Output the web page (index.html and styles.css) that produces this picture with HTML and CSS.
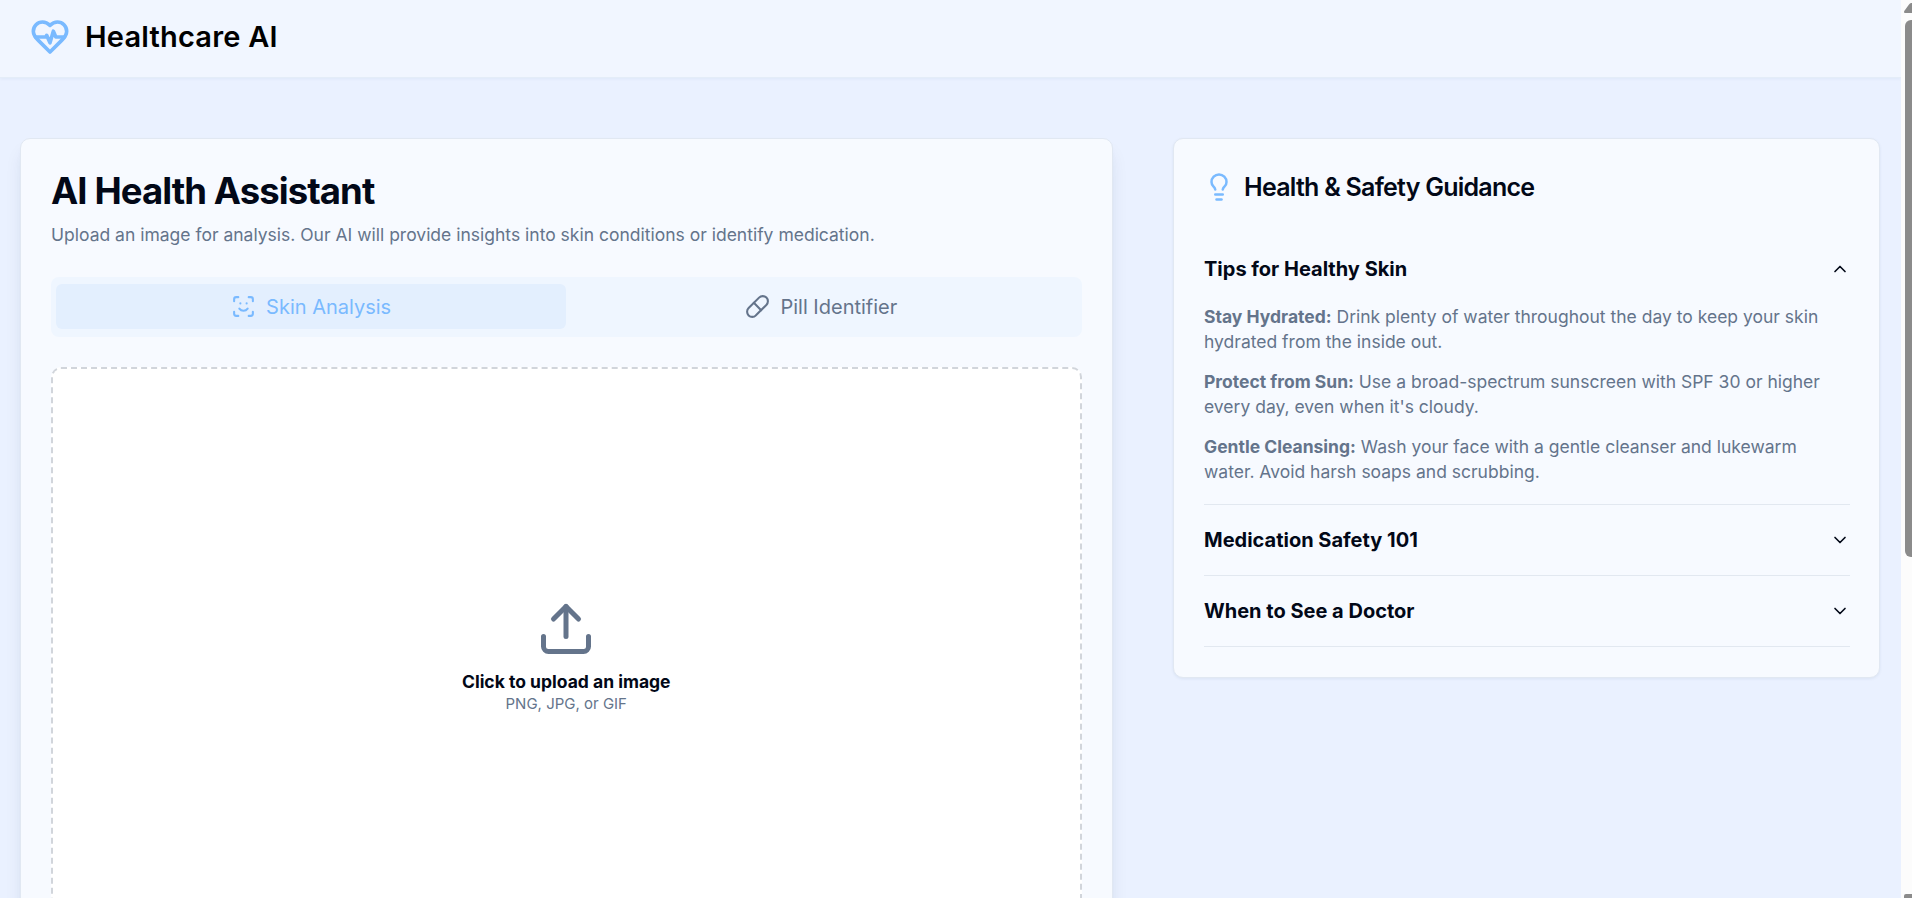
FILE: index.html
```html
<!DOCTYPE html>
<html lang="en">
<head>
<meta charset="utf-8">
<title>Healthcare AI</title>
<link rel="stylesheet" href="styles.css">
</head>
<body>
<div class="page">
  <header class="header">
    <svg class="icon logo" viewBox="0 0 24 24"><path d="M19 14c1.49-1.46 3-3.21 3-5.5A5.5 5.5 0 0 0 16.5 3c-1.76 0-3 .5-4.5 2-1.5-1.5-2.74-2-4.5-2A5.5 5.5 0 0 0 2 8.5c0 2.3 1.5 4.05 3 5.5l7 7Z"/><path d="M3.22 12H9.5l.5-1 2 4.5 2-7 1.5 3.5h5.27"/></svg>
    <span class="brand">Healthcare AI</span>
  </header>
  <main class="main">
    <section class="card assistant">
      <h1 class="title">AI Health Assistant</h1>
      <p class="subtitle">Upload an image for analysis. Our AI will provide insights into skin conditions or identify medication.</p>
      <div class="tabs">
        <button class="tab tab-active">
          <svg class="icon tab-icon" viewBox="0 0 24 24"><path d="M3 7V5a2 2 0 0 1 2-2h2"/><path d="M17 3h2a2 2 0 0 1 2 2v2"/><path d="M21 17v2a2 2 0 0 1-2 2h-2"/><path d="M7 21H5a2 2 0 0 1-2-2v-2"/><path d="M8 14s1.5 2 4 2 4-2 4-2"/><path d="M9 9h.01"/><path d="M15 9h.01"/></svg>
          Skin Analysis
        </button>
        <button class="tab">
          <svg class="icon tab-icon" viewBox="0 0 24 24"><path d="m10.5 20.5 10-10a4.95 4.95 0 1 0-7-7l-10 10a4.95 4.95 0 1 0 7 7Z"/><path d="m8.5 8.5 7 7"/></svg>
          Pill Identifier
        </button>
      </div>
      <div class="dropzone">
        <svg class="icon upload" viewBox="0 0 24 24"><path d="M21 15v4a2 2 0 0 1-2 2H5a2 2 0 0 1-2-2v-4"/><path d="m17 8-5-5-5 5"/><path d="M12 3v12"/></svg>
        <p class="drop-title">Click to upload an image</p>
        <p class="drop-hint">PNG, JPG, or GIF</p>
      </div>
    </section>
    <aside class="card guidance">
      <h2 class="guidance-head">
        <svg class="icon bulb" viewBox="0 0 24 24"><path d="M15 14c.2-1 .7-1.7 1.5-2.5 1-.9 1.5-2.2 1.5-3.5A6 6 0 0 0 6 8c0 1 .2 2.2 1.5 3.5.7.7 1.3 1.5 1.5 2.5"/><path d="M9 18h6"/><path d="M10 22h4"/></svg>
        <span>Health &amp; Safety Guidance</span>
      </h2>
      <div class="item">
        <h3 class="trigger">Tips for Healthy Skin<svg class="icon chevron" viewBox="0 0 24 24"><path d="m18 15-6-6-6 6"/></svg></h3>
        <div class="answer">
          <p><strong>Stay Hydrated:</strong> Drink plenty of water throughout the day to keep your skin hydrated from the inside out.</p>
          <p><strong>Protect from Sun:</strong> Use a broad-spectrum sunscreen with SPF 30 or higher every day, even when it's cloudy.</p>
          <p><strong>Gentle Cleansing:</strong> Wash your face with a gentle cleanser and lukewarm water. Avoid harsh soaps and scrubbing.</p>
        </div>
      </div>
      <div class="item">
        <h3 class="trigger">Medication Safety 101<svg class="icon chevron" viewBox="0 0 24 24"><path d="m6 9 6 6 6-6"/></svg></h3>
      </div>
      <div class="item">
        <h3 class="trigger">When to See a Doctor<svg class="icon chevron" viewBox="0 0 24 24"><path d="m6 9 6 6 6-6"/></svg></h3>
      </div>
    </aside>
  </main>
</div>
<div class="scrollbar">
  <svg class="arrow" viewBox="0 0 11 20"><path d="M3 12Q3 13 4 13H11V3H10Q9 3 8 4.500L4 10Q3 11 3 12Z"/></svg>
  <div class="thumb"></div>
  <svg class="arrow arrow-down" viewBox="0 0 11 4"><path d="M3 4V2Q3 0 5 0H11V4Z"/></svg>
</div>
</body>
</html>
```

FILE: styles.css
```css
* { box-sizing: border-box; margin: 0; padding: 0; }

body {
  display: flex;
  height: 898px;
  overflow: hidden;
  background: #eaf1ff;
  color: #020817;
  font-family: Inter, "Liberation Sans", sans-serif;
  font-size: 17.5px;
  line-height: 25px;
}

.page { flex: 1; min-width: 0; height: 898px; overflow: hidden; }

.icon {
  flex: none;
  fill: none;
  stroke: currentColor;
  stroke-width: 2;
  stroke-linecap: round;
  stroke-linejoin: round;
}

.header {
  display: flex;
  align-items: center;
  gap: 15px;
  height: 78px;
  padding: 0 30px 4px;
  background: #f1f6ff;
  border-bottom: 1px solid #e4edf8;
  box-shadow: 0 1px 3px rgba(30, 80, 140, .06);
}
.logo { width: 40px; height: 40px; color: #7abaff; stroke-width: 2.2; }
.brand { font-size: 29px; font-weight: 600; line-height: 40px; letter-spacing: .2px; color: #000; }

.main {
  display: grid;
  grid-template-columns: 1092.5px 707px;
  gap: 60.5px;
  align-items: start;
  padding: 60px 20px;
}
.card {
  padding: 30px;
  background: #f7faff;
  border: 1px solid #e1e8f2;
  border-radius: 10px;
}
.assistant { box-shadow: 0 12px 19px -4px rgba(30, 50, 90, .11), 0 5px 8px -5px rgba(30, 50, 90, .1); }
.guidance { padding: 30px 29px 30px 30px; box-shadow: 0 1px 3px rgba(30, 60, 110, .08); }

.title { height: 45px; font-size: 36.5px; font-weight: 700; line-height: 44px; letter-spacing: -.92px; }
.subtitle { margin-top: 8px; line-height: 25px; color: #64748b; }

.tabs {
  display: grid;
  grid-template-columns: 1fr 1fr;
  height: 60px;
  margin-top: 30px;
  padding: 7px 5px 8px;
  background: #eff6ff;
  border-radius: 8px;
}
.tab {
  display: flex;
  align-items: center;
  justify-content: center;
  gap: 10px;
  border: 0;
  border-radius: 6px;
  background: transparent;
  color: #64748b;
  font: 400 20px/28px Inter, sans-serif;
}
.tab-active { background: #e3effe; color: #7abaff; }
.tab-icon { width: 25px; height: 25px; }

.dropzone {
  display: flex;
  flex-direction: column;
  align-items: center;
  justify-content: center;
  height: 578px;
  margin-top: 30px;
  background: #fff;
  border: 2px dashed #d1d5db;
  border-radius: 10px;
  color: #64748b;
}
.upload { width: 60px; height: 60px; margin-bottom: 10px; }
.drop-title { font-weight: 700; line-height: 25px; color: #020817; }
.drop-hint { font-size: 15px; line-height: 20px; }

.guidance-head {
  display: flex;
  align-items: center;
  gap: 10px;
  height: 36px;
  font-size: 25px;
  font-weight: 600;
  letter-spacing: -.75px;
}
.bulb { width: 30px; height: 30px; color: #7abaff; }
.item { border-bottom: 1px solid #e2e8f0; }
.guidance-head + .item { margin-top: 29px; }
.trigger {
  display: flex;
  align-items: center;
  justify-content: space-between;
  height: 70px;
  font-size: 20px;
  font-weight: 700;
}
.chevron { width: 20px; height: 20px; }
.answer { display: grid; gap: 15px; padding-bottom: 20px; color: #64748b; }

.scrollbar {
  display: flex;
  flex-direction: column;
  flex: none;
  width: 11px;
  height: 898px;
  background: #fcfcfc;
}
.arrow { display: block; width: 11px; height: 20px; fill: #8b8b8b; }
.arrow-down { height: 4px; margin-top: auto; }
.thumb { height: 537px; margin-left: 4px; background: #8b8b8b; border-radius: 6px 0 0 6px; }
```
